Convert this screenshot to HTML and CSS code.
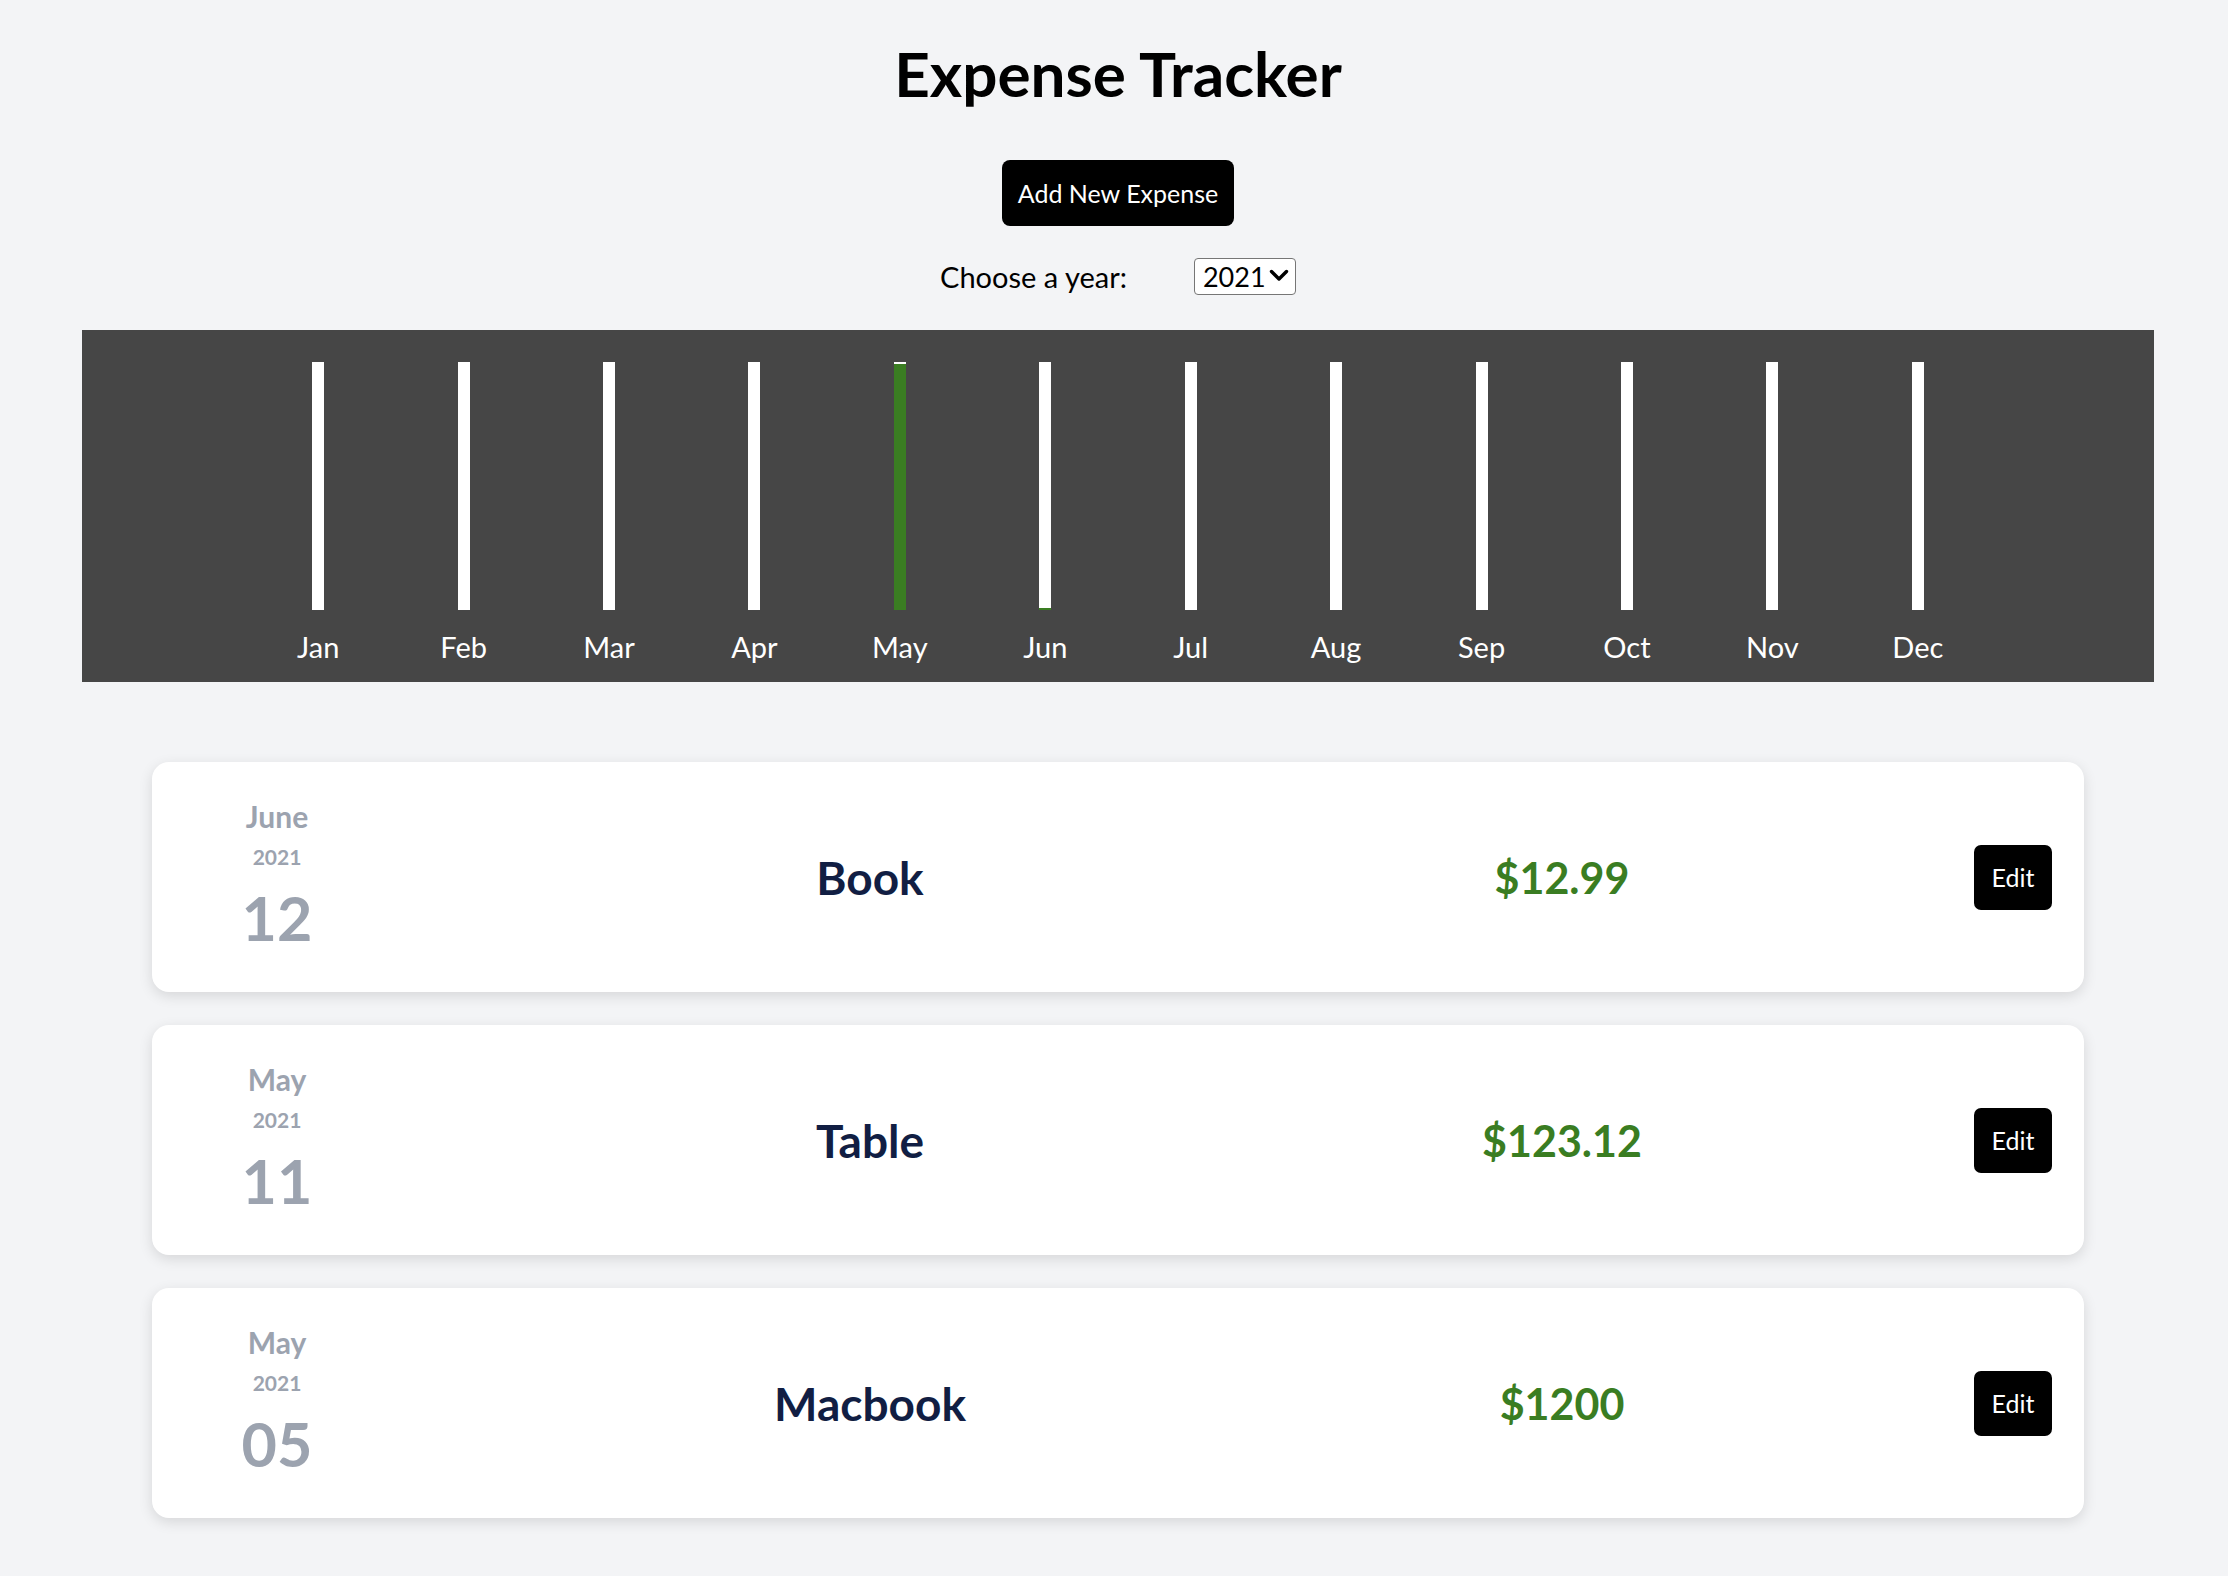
FILE: index.html
```html
<!DOCTYPE html>
<html lang="en">
<head>
<meta charset="utf-8">
<title>Expense Tracker</title>
<link rel="stylesheet" href="styles.css">
</head>
<body>
<div class="page">
  <h1 class="title">Expense Tracker</h1>
  <div class="actions">
    <button class="btn btn-add" type="button">Add New Expense</button>
  </div>
  <div class="filter">
    <label class="filter-label" for="year">Choose a year:</label>
    <div class="select-wrap">
      <select class="filter-select" id="year">
        <option>2021</option>
        <option>2022</option>
        <option>2020</option>
        <option>2019</option>
      </select>
      <svg class="select-chevron" viewBox="0 0 20 13" width="20" height="13" aria-hidden="true">
        <path d="M2.5 2.5 L10 10 L17.5 2.5" fill="none" stroke="#000" stroke-width="3.4" stroke-linecap="round" stroke-linejoin="round"/>
      </svg>
    </div>
  </div>

  <section class="chart">
    <div class="chart-grid">
      <div class="chart-col"><div class="bar"><div class="bar-fill" style="height:0%"></div></div><span class="bar-label">Jan</span></div>
      <div class="chart-col"><div class="bar"><div class="bar-fill" style="height:0%"></div></div><span class="bar-label">Feb</span></div>
      <div class="chart-col"><div class="bar"><div class="bar-fill" style="height:0%"></div></div><span class="bar-label">Mar</span></div>
      <div class="chart-col"><div class="bar"><div class="bar-fill" style="height:0%"></div></div><span class="bar-label">Apr</span></div>
      <div class="chart-col"><div class="bar"><div class="bar-fill" style="height:99.03%"></div></div><span class="bar-label">May</span></div>
      <div class="chart-col"><div class="bar"><div class="bar-fill" style="height:0.97%"></div></div><span class="bar-label">Jun</span></div>
      <div class="chart-col"><div class="bar"><div class="bar-fill" style="height:0%"></div></div><span class="bar-label">Jul</span></div>
      <div class="chart-col"><div class="bar"><div class="bar-fill" style="height:0%"></div></div><span class="bar-label">Aug</span></div>
      <div class="chart-col"><div class="bar"><div class="bar-fill" style="height:0%"></div></div><span class="bar-label">Sep</span></div>
      <div class="chart-col"><div class="bar"><div class="bar-fill" style="height:0%"></div></div><span class="bar-label">Oct</span></div>
      <div class="chart-col"><div class="bar"><div class="bar-fill" style="height:0%"></div></div><span class="bar-label">Nov</span></div>
      <div class="chart-col"><div class="bar"><div class="bar-fill" style="height:0%"></div></div><span class="bar-label">Dec</span></div>
    </div>
  </section>

  <ul class="expenses">
    <li class="expense">
      <div class="date">
        <span class="date-month">June</span>
        <span class="date-year">2021</span>
        <span class="date-day">12</span>
      </div>
      <h2 class="expense-title">Book</h2>
      <div class="expense-amount">$12.99</div>
      <span></span>
      <button class="btn btn-edit" type="button">Edit</button>
    </li>
    <li class="expense">
      <div class="date">
        <span class="date-month">May</span>
        <span class="date-year">2021</span>
        <span class="date-day">11</span>
      </div>
      <h2 class="expense-title">Table</h2>
      <div class="expense-amount">$123.12</div>
      <span></span>
      <button class="btn btn-edit" type="button">Edit</button>
    </li>
    <li class="expense">
      <div class="date">
        <span class="date-month">May</span>
        <span class="date-year">2021</span>
        <span class="date-day">05</span>
      </div>
      <h2 class="expense-title">Macbook</h2>
      <div class="expense-amount">$1200</div>
      <span></span>
      <button class="btn btn-edit" type="button">Edit</button>
    </li>
  </ul>
</div>
</body>
</html>
```

FILE: styles.css
```css
* {
  box-sizing: border-box;
}

html, body {
  margin: 0;
  padding: 0;
  background: #f3f4f6;
}

body {
  font-family: Lato, "Liberation Sans", sans-serif;
  color: #000;
}

.page {
  margin-left: 8px;
  padding-bottom: 57px;
}

.title {
  margin: 36px 0 0;
  font-size: 62px;
  line-height: 74px;
  font-weight: 700;
  text-align: center;
}

.actions {
  display: flex;
  justify-content: center;
  margin-top: 50px;
}

.btn {
  font-family: inherit;
  background: #000;
  color: #fff;
  border: none;
  cursor: pointer;
}

.btn-add {
  height: 66px;
  padding: 0 16px;
  font-size: 25px;
  border-radius: 8px;
}

.filter {
  display: flex;
  justify-content: center;
  align-items: center;
  gap: 67px;
  margin-top: 32px;
  height: 37px;
}

.filter-label {
  font-size: 29px;
}

.select-wrap {
  position: relative;
  width: 102px;
  height: 37px;
}

.filter-select {
  appearance: none;
  -webkit-appearance: none;
  width: 100%;
  height: 100%;
  font-family: inherit;
  font-size: 27px;
  border: 1.5px solid #767676;
  border-radius: 4px;
  background: #fff;
  color: #000;
  padding: 0 0 0 8px;
  line-height: 34px;
}

.select-chevron {
  position: absolute;
  right: 7px;
  top: 11px;
  pointer-events: none;
}

.chart {
  margin: 35px 74px 0;
  height: 352px;
  background: #464646;
  padding-top: 32px;
}

.chart-grid {
  width: 1745px;
  margin: 0 auto;
  display: grid;
  grid-template-columns: repeat(12, 1fr);
}

.chart-col {
  display: flex;
  flex-direction: column;
  align-items: center;
}

.bar {
  width: 12px;
  height: 248px;
  background: #fff;
  display: flex;
  flex-direction: column;
  justify-content: flex-end;
}

.bar-fill {
  width: 100%;
  background: #3a7d22;
}

.bar-label {
  margin-top: 19px;
  font-size: 29px;
  line-height: 35px;
  color: #fff;
}

.expenses {
  list-style: none;
  margin: 80px 144px 0;
  padding: 0;
  display: flex;
  flex-direction: column;
  gap: 33px;
}

.expense {
  height: 230px;
  background: #fff;
  border-radius: 17px;
  box-shadow: 0 4px 14px rgba(0, 0, 0, 0.12);
  padding: 0 32px;
  display: grid;
  grid-template-columns: 186px 1000px 384px 1fr 78px;
  align-items: center;
}

.date {
  display: flex;
  flex-direction: column;
  align-items: center;
  color: #9ca3af;
  font-weight: 700;
  margin-bottom: 6px;
}

.date-month {
  font-size: 30px;
  line-height: 36px;
  margin-bottom: 10px;
}

.date-year {
  font-size: 21px;
  line-height: 26px;
  margin-bottom: 15px;
}

.date-day {
  font-size: 61px;
  line-height: 66px;
}

.expense-title {
  margin: 0;
  text-align: center;
  font-size: 46px;
  font-weight: 700;
  color: #111e43;
}

.expense-amount {
  text-align: center;
  font-size: 43px;
  font-weight: 700;
  color: #3a7d22;
}

.btn-edit {
  width: 78px;
  height: 65px;
  font-size: 25px;
  border-radius: 7px;
  padding: 0;
}
```
